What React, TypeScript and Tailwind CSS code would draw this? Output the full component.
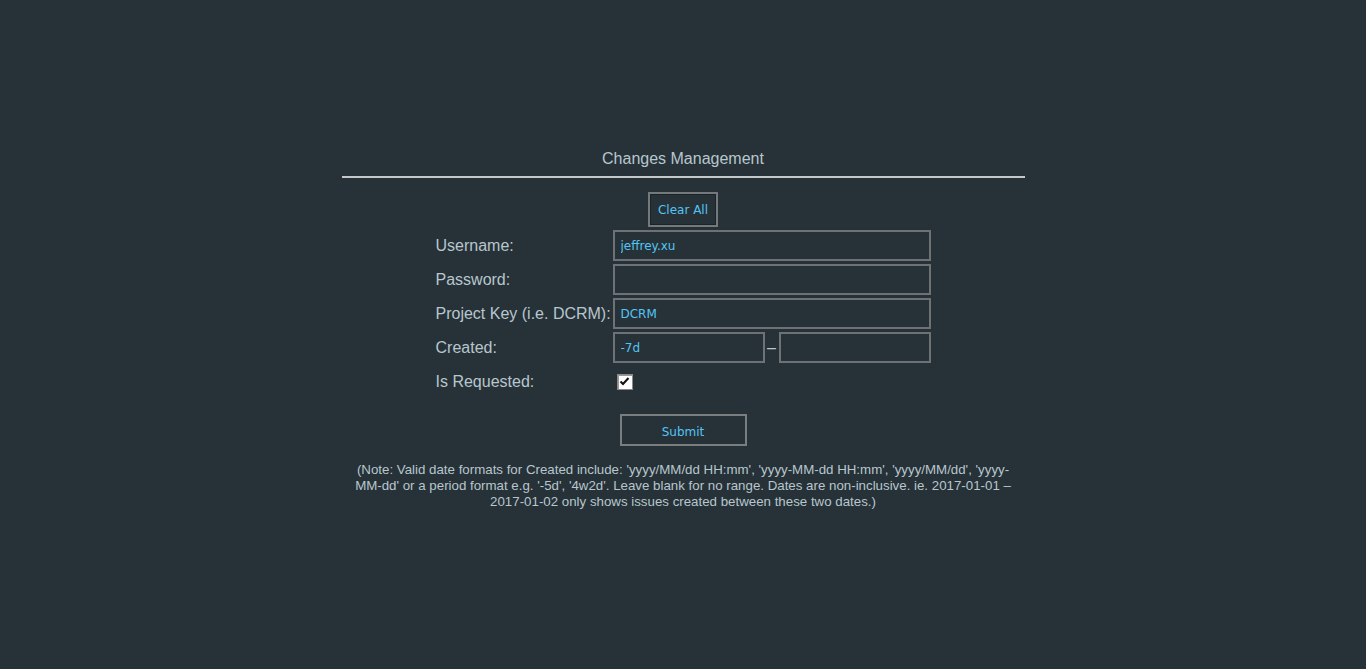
import React from "react";

const inputCls =
  "h-[31px] border-2 border-[#6e7274] bg-[#263238] px-[6px] text-[12px] text-[#55c4f4] outline-none [font-family:'DejaVu_Sans',Verdana,sans-serif]";

export default function App() {
  return (
    <div className="min-h-screen w-full bg-[#263238] [font-family:'Liberation_Sans',Arial,sans-serif] text-[#b8c6cd]">
      <div className="mx-auto flex w-[683px] flex-col items-center pt-[149px]">
        <div className="text-[16px] leading-[19px] text-[#b8c6cd]">Changes Management</div>
        <div className="mt-[8px] h-[2px] w-full bg-[#c4c8ca]" />
        <button className="mt-[14px] flex h-[35px] w-[70px] items-center justify-center border-2 border-[#74797b] bg-[#263238] pt-[1px] text-[12px] text-[#55c4f4] shadow-[inset_1px_1px_0_#1c2327,inset_-1px_-1px_0_#1c2327] [font-family:'DejaVu_Sans',Verdana,sans-serif]">
          Clear All
        </button>
        <div className="mt-[3px] grid grid-cols-[177px_318px] gap-y-[3px]">
          <div className="flex h-[31px] items-center text-[16px]">Username:</div>
          <input className={inputCls + " w-[318px]"} defaultValue="jeffrey.xu" />
          <div className="flex h-[31px] items-center text-[16px]">Password:</div>
          <input className={inputCls + " w-[318px]"} type="password" defaultValue="" />
          <div className="flex h-[31px] items-center whitespace-nowrap text-[16px]">Project Key (i.e. DCRM):</div>
          <input className={inputCls + " w-[318px]"} defaultValue="DCRM" />
          <div className="flex h-[31px] items-center text-[16px]">Created:</div>
          <div className="flex items-center">
            <input className={inputCls + " w-[152px]"} defaultValue="-7d" />
            <span className="w-[14px] text-center text-[16px] text-[#b8c6cd]">–</span>
            <input className={inputCls + " w-[152px]"} defaultValue="" />
          </div>
          <div className="flex h-[31px] items-center text-[16px]">Is Requested:</div>
          <div className="flex h-[31px] items-center pl-[4px]">
            <span className="flex h-[16px] w-[16px] items-center justify-center border border-[#8a8a8a] bg-white shadow-[inset_1px_1px_0_#9a9a9a]">
              <svg width="11" height="11" viewBox="0 0 11 11">
                <path d="M1.5 5.5 L4 8 L9.5 2" fill="none" stroke="#111" strokeWidth="2" />
              </svg>
            </span>
          </div>
        </div>
        <button className="mt-[17px] flex h-[32px] w-[127px] items-center justify-center border-2 border-[#7a7e80] bg-[#263238] pt-[3px] text-[12px] text-[#55c4f4] [font-family:'DejaVu_Sans',Verdana,sans-serif]">
          Submit
        </button>
        <p className="mt-[16px] w-[683px] px-[10px] text-center text-[13.3px] leading-[16px] text-[#b8c6cd]">
          (Note: Valid date formats for Created include: 'yyyy/MM/dd HH:mm', 'yyyy-MM-dd HH:mm', 'yyyy/MM/dd', 'yyyy-MM-dd' or a period format e.g. '-5d', '4w2d'. Leave blank for no range. Dates are non-inclusive. ie. 2017-01-01 – 2017-01-02 only shows issues created between these two dates.)
        </p>
      </div>
    </div>
  );
}
